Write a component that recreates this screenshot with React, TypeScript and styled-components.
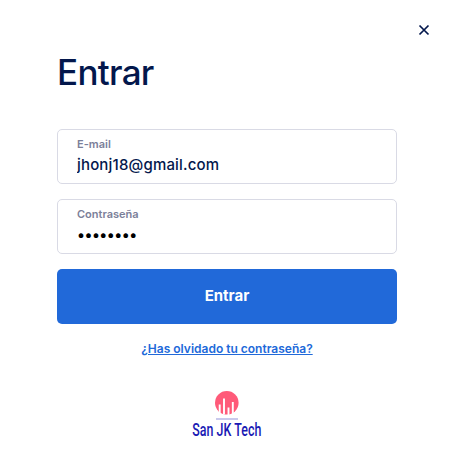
import React from 'react';
import styled, { createGlobalStyle } from 'styled-components';

const GlobalStyle = createGlobalStyle`
  * { box-sizing: border-box; }
  body { margin: 0; background: #fff; font-family: Inter, 'Liberation Sans', sans-serif; }
`;

const Dialog = styled.main`
  display: flex;
  flex-direction: column;
  width: 455px;
  height: 463px;
  padding: 20px 58px 0 57px;
  background: #fff;
  overflow: hidden;
`;

const CloseButton = styled.button`
  align-self: flex-end;
  display: flex;
  align-items: center;
  justify-content: center;
  width: 20px;
  height: 20px;
  margin-right: -37px;
  padding: 0;
  border: 0;
  background: none;
`;

const Title = styled.h1`
  margin: 10px 0 35px;
  color: #03174c;
  font-size: 35px;
  line-height: 44px;
  font-weight: 500;
  letter-spacing: -0.7px;
`;

const Form = styled.form`
  display: flex;
  flex-direction: column;
  gap: 15px;
`;

const Field = styled.label`
  display: flex;
  flex-direction: column;
  height: 55px;
  padding: 7px 19px 0;
  border: 1px solid #d9dae5;
  border-radius: 5px;
`;

const FieldLabel = styled.span`
  color: #7b8099;
  font-size: 11px;
  line-height: 15px;
  font-weight: 600;
`;

const FieldInput = styled.input`
  width: 100%;
  height: 22px;
  margin-top: 2px;
  padding: 0;
  border: 0;
  outline: 0;
  background: none;
  color: #03174c;
  font: 500 15px/22px Inter, sans-serif;
  letter-spacing: 0.17px;

  &[type='password'] {
    color: #000;
    letter-spacing: -0.55px;
  }
`;

const SubmitButton = styled.button`
  height: 55px;
  padding: 0 0 2px;
  border: 0;
  border-radius: 5px;
  background: #2169d9;
  color: #fff;
  font: 700 15px/20px Inter, sans-serif;
`;

const ForgotLink = styled.a`
  align-self: center;
  margin-top: 17px;
  color: #2169d9;
  font-size: 12px;
  line-height: 16px;
  font-weight: 600;
  text-decoration: underline;
`;

const Logo = styled.svg`
  display: block;
  align-self: center;
  flex: none;
  margin-top: 32px;
  overflow: visible;
`;

export default function App() {
  return (
    <>
      <GlobalStyle />
      <Dialog>
        <CloseButton aria-label="Cerrar">
          <svg width="20" height="20" viewBox="0 0 20 20">
            <path d="M5.5 5.5 14.5 14.5M14.5 5.5 5.5 14.5" stroke="#03174c" strokeWidth="1.7" />
          </svg>
        </CloseButton>
        <Title>Entrar</Title>
        <Form onSubmit={(e) => e.preventDefault()}>
          <Field>
            <FieldLabel>E-mail</FieldLabel>
            <FieldInput type="text" defaultValue="jhonj18@gmail.com" spellCheck={false} />
          </Field>
          <Field>
            <FieldLabel>Contraseña</FieldLabel>
            <FieldInput type="password" defaultValue="12345678" />
          </Field>
          <SubmitButton type="submit">Entrar</SubmitButton>
        </Form>
        <ForgotLink href="#">¿Has olvidado tu contraseña?</ForgotLink>
        <Logo width="72" height="56" viewBox="0 0 72 56">
          <circle cx="35.8" cy="13.8" r="11.8" fill="#ff5a79" />
          <path
            d="M28.700 15.500v9M33 9.500v16M37.500 18.500v7.500M41.800 13v12"
            stroke="#fff"
            strokeWidth="1.9"
          />
          <path d="M25 30H47" stroke="#bcbce8" strokeWidth="1.6" />
          <text
            transform="translate(1.300 47) scale(0.69 1)"
            fill="#1a1ab4"
            fontFamily="Roboto, sans-serif"
            fontSize="18"
            fontWeight="500"
            textLength="100"
          >
            San JK Tech
          </text>
        </Logo>
      </Dialog>
    </>
  );
}
